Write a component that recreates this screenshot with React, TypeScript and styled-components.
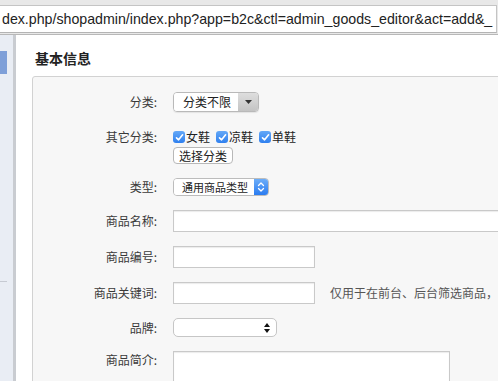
import React from "react";
import styled, { createGlobalStyle } from "styled-components";

const Global = createGlobalStyle`
  html, body { margin: 0; padding: 0; background: #fff; overflow: hidden; }
  body { font-family: "Liberation Sans", "Noto Sans CJK SC", sans-serif; }
`;

const Page = styled.div`
  width: 498px;
  height: 381px;
  overflow: hidden;
  display: flex;
  flex-direction: column;
`;

const Chrome = styled.div`
  height: 35px;
  background: #e8e8e8;
  padding-top: 5px;
  box-sizing: border-box;
  border-bottom: 1px solid #b8b8b8;
  flex: none;
`;

const UrlField = styled.div`
  height: 28px;
  width: 497px;
  box-sizing: border-box;
  background: #fff;
  border-top: 1px solid #c4c4c4;
  border-bottom: 1px solid #b4b4b4;
  border-right: 1px solid #c4c4c4;
  font-family: "Liberation Sans", Helvetica, sans-serif;
  font-size: 14.2px;
  line-height: 26px;
  color: #222;
  padding-left: 2px;
  white-space: nowrap;
  overflow: hidden;
`;

const Body = styled.div`
  flex: 1;
  display: flex;
  min-height: 0;
`;

const Sidebar = styled.div`
  width: 13px;
  flex: none;
  background: #e9edf4;
  border-right: 3px solid #c9ccd1;
  display: flex;
  flex-direction: column;
  padding-top: 16px;
`;

const NavActive = styled.div`
  width: 7px;
  height: 23px;
  background: #7e9fd8;
`;

const NavRule = styled.div`
  width: 7px;
  height: 1px;
  background: #c6cad2;
  margin-top: 207px;
`;

const Content = styled.div`
  flex: 1;
  padding: 13px 0 0 16px;
  font-family: "Noto Sans CJK SC", sans-serif;
  min-width: 0;
`;

const Title = styled.div`
  font-size: 14px;
  font-weight: bold;
  color: #222;
  line-height: 20px;
  padding-left: 3px;
  margin-bottom: 8px;
`;

const Panel = styled.div`
  width: 560px;
  height: 400px;
  box-sizing: border-box;
  background: #f7f7f7;
  border: 1px solid #d2d2d2;
  border-radius: 3px;
  padding-top: 8px;
`;

const Row = styled.div`
  display: flex;
  align-items: flex-start;
  padding: 7px 0;
  gap: 16px;
`;

const Label = styled.div<{ $lh: number }>`
  width: 124px;
  flex: none;
  text-align: right;
  font-size: 12px;
  color: #3a3a3a;
  line-height: ${(p) => p.$lh}px;
  white-space: nowrap;
`;

const Field = styled.div`
  display: flex;
  flex-direction: column;
  align-items: flex-start;
`;

const Inline = styled.div`
  display: flex;
  align-items: center;
`;

const PopSelect = styled.div<{ $w: number }>`
  width: ${(p) => p.$w}px;
  height: 20px;
  box-sizing: border-box;
  border: 1px solid #b9b9b9;
  border-radius: 4px;
  display: flex;
  overflow: hidden;
  font-size: 12px;
  color: #222;
  box-shadow: 0 1px 1px rgba(0, 0, 0, 0.08);
`;

const PopText = styled.div`
  flex: 1;
  background: #fff;
  padding-left: 9px;
  line-height: 18px;
`;

const PopArrow = styled.div`
  width: 20px;
  background: linear-gradient(#dedede, #c4c4c4);
  display: flex;
  align-items: center;
  justify-content: center;
`;

const TypeSelect = styled.div`
  width: 96px;
  height: 18px;
  box-sizing: border-box;
  border: 1px solid #bcbcbc;
  border-radius: 4px;
  display: flex;
  overflow: hidden;
  font-size: 11px;
  color: #222;
`;

const TypeText = styled.div`
  flex: 1;
  background: #fff;
  padding-left: 8px;
  line-height: 16px;
`;

const BlueArrow = styled.div`
  width: 14px;
  background: linear-gradient(#6cadf8, #2b7cf0);
  display: flex;
  align-items: center;
  justify-content: center;
`;

const Checks = styled.div`
  display: flex;
  align-items: center;
  height: 22px;
  gap: 6px;
`;

const CheckItem = styled.label`
  display: flex;
  align-items: center;
  font-size: 12px;
  color: #222;
  line-height: 22px;
`;

const Box = styled.span`
  width: 12px;
  height: 12px;
  border-radius: 3px;
  background: linear-gradient(#64a8f7, #2f80ef);
  display: inline-flex;
  align-items: center;
  justify-content: center;
  margin-right: 1px;
`;

const SmallButton = styled.div`
  height: 17px;
  box-sizing: border-box;
  padding: 0 5px;
  border: 1px solid #b8b8b8;
  border-radius: 4px;
  background: #fff;
  font-size: 12px;
  line-height: 15px;
  color: #222;
  margin-top: -1px;
`;

const TextInput = styled.div<{ $w: number }>`
  width: ${(p) => p.$w}px;
  height: 22px;
  box-sizing: border-box;
  background: #fff;
  border: 1px solid #c9c9c9;
  box-shadow: inset 0 1px 1px rgba(0, 0, 0, 0.08);
`;

const Hint = styled.div`
  font-size: 12px;
  color: #555;
  margin-left: 15px;
  white-space: nowrap;
  line-height: 22px;
`;

const BrandSelect = styled.div`
  width: 104px;
  height: 19px;
  box-sizing: border-box;
  background: #fff;
  border: 1px solid #c6c6c6;
  border-radius: 5px;
  display: flex;
  justify-content: flex-end;
  align-items: center;
  padding-right: 6px;
`;

const TextArea = styled.div`
  width: 277px;
  height: 60px;
  box-sizing: border-box;
  background: #fff;
  border: 1px solid #c9c9c9;
  box-shadow: inset 0 1px 1px rgba(0, 0, 0, 0.08);
`;

const Check = () => (
  <Box>
    <svg width="9" height="9" viewBox="0 0 9 9">
      <path d="M1.5 4.8 L3.6 6.8 L7.6 1.8" fill="none" stroke="#fff" strokeWidth="1.6" strokeLinecap="round" strokeLinejoin="round" />
    </svg>
  </Box>
);

export default function App() {
  return (
    <Page>
      <Global />
      <Chrome>
        <UrlField>dex.php/shopadmin/index.php?app=b2c&amp;ctl=admin_goods_editor&amp;act=add&amp;_</UrlField>
      </Chrome>
      <Body>
        <Sidebar>
          <NavActive />
          <NavRule />
        </Sidebar>
        <Content>
          <Title>基本信息</Title>
          <Panel>
            <Row>
              <Label $lh={20}>分类:</Label>
              <Field>
                <PopSelect $w={86}>
                  <PopText>分类不限</PopText>
                  <PopArrow>
                    <svg width="7" height="4" viewBox="0 0 7 4">
                      <path d="M0 0 H7 L3.5 4 Z" fill="#333" />
                    </svg>
                  </PopArrow>
                </PopSelect>
              </Field>
            </Row>
            <Row>
              <Label $lh={22}>其它分类:</Label>
              <Field>
                <Checks>
                  <CheckItem><Check />女鞋</CheckItem>
                  <CheckItem><Check />凉鞋</CheckItem>
                  <CheckItem><Check />单鞋</CheckItem>
                </Checks>
                <SmallButton>选择分类</SmallButton>
              </Field>
            </Row>
            <Row>
              <Label $lh={18}>类型:</Label>
              <Field>
                <TypeSelect>
                  <TypeText>通用商品类型</TypeText>
                  <BlueArrow>
                    <svg width="8" height="12" viewBox="0 0 8 12">
                      <path d="M1.5 4.5 L4 2 L6.5 4.5 M1.5 7.5 L4 10 L6.5 7.5" fill="none" stroke="#fff" strokeWidth="1.3" strokeLinecap="round" strokeLinejoin="round" />
                    </svg>
                  </BlueArrow>
                </TypeSelect>
              </Field>
            </Row>
            <Row>
              <Label $lh={22}>商品名称:</Label>
              <Field>
                <TextInput $w={340} />
              </Field>
            </Row>
            <Row>
              <Label $lh={22}>商品编号:</Label>
              <Field>
                <TextInput $w={142} />
              </Field>
            </Row>
            <Row>
              <Label $lh={22}>商品关键词:</Label>
              <Inline>
                <TextInput $w={142} />
                <Hint>仅用于在前台、后台筛选商品，</Hint>
              </Inline>
            </Row>
            <Row>
              <Label $lh={19}>品牌:</Label>
              <Field>
                <BrandSelect>
                  <svg width="6" height="10" viewBox="0 0 6 10">
                    <path d="M3 0 L6 4 H0 Z M0 6 H6 L3 10 Z" fill="#111" />
                  </svg>
                </BrandSelect>
              </Field>
            </Row>
            <Row>
              <Label $lh={18}>商品简介:</Label>
              <Field>
                <TextArea />
              </Field>
            </Row>
          </Panel>
        </Content>
      </Body>
    </Page>
  );
}
